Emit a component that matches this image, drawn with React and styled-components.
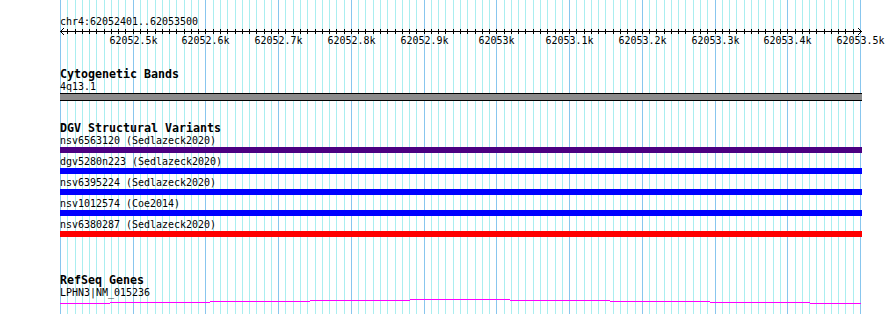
import React from "react";
import styled, { createGlobalStyle } from "styled-components";

const Global = createGlobalStyle`
  html, body { margin: 0; padding: 0; background: #fff; }
  body { font-family: "DejaVu Sans Mono", "Liberation Mono", monospace; color: #000; }
`;

const Page = styled.div`
  position: relative;
  width: 890px;
  height: 314px;
  overflow: hidden;
  background: #fff;
`;

const GridLayer = styled.svg`
  position: absolute;
  left: 0;
  top: 0;
  z-index: 0;
`;

const Content = styled.div`
  position: relative;
  z-index: 1;
  display: flex;
  flex-direction: column;
  padding-left: 60px;
  width: 802px;
`;

const RulerLabel = styled.div`
  margin-top: 15px;
  font-size: 9.97px;
  line-height: 13px;
  height: 13px;
  white-space: pre;
`;

const Axis = styled.svg`
  display: block;
  overflow: visible;
`;

const Track = styled.section`
  display: flex;
  flex-direction: column;
  margin-top: ${(p) => p.$gap}px;
`;

const TrackTitle = styled.div`
  font-weight: bold;
  font-size: 11.63px;
  line-height: 12px;
  height: 12px;
  white-space: pre;
`;

const FeatureLabel = styled.div`
  font-size: 9.97px;
  line-height: 13px;
  height: 13px;
  white-space: pre;
`;

const BandBar = styled.div`
  height: 6px;
  background: #8c8c8c;
  border-top: 1px solid #000;
  border-bottom: 1px solid #000;
`;

const FeatureRow = styled.div`
  display: flex;
  flex-direction: column;
  padding-bottom: 2px;
`;

const FeatureBar = styled.div`
  height: 6px;
  background: ${(p) => p.$color};
`;

const GeneLine = styled.svg`
  display: block;
`;

const minorXs = Array.from({ length: 111 }, (_, j) => ({
  x: 60 + Math.round((j * 800) / 110),
  major: j % 10 === 0,
}));

const tickLabels = Array.from({ length: 11 }, (_, k) => {
  const i = k + 1;
  const v = 620524 + i;
  const whole = Math.floor(v / 10);
  const frac = v % 10;
  return {
    x: Math.round((i * 800) / 11) + 0.5,
    text: frac === 0 ? `${whole}k` : `${whole}.${frac}k`,
  };
});

const features = [
  { label: "nsv6563120 (Sedlazeck2020)", color: "#4b0082" },
  { label: "dgv5280n223 (Sedlazeck2020)", color: "#0000ff" },
  { label: "nsv6395224 (Sedlazeck2020)", color: "#0000ff" },
  { label: "nsv1012574 (Coe2014)", color: "#0000ff" },
  { label: "nsv6380287 (Sedlazeck2020)", color: "#ff0000" },
];

const geneSegments = [
  [0, 50, 4],
  [50, 150, 3],
  [150, 250, 2],
  [250, 350, 1],
  [350, 450, 0],
  [450, 550, 1],
  [550, 650, 2],
  [650, 750, 3],
  [750, 801, 4],
];

export default function App() {
  return (
    <>
      <Global />
      <Page>
        <GridLayer width="890" height="314" shapeRendering="crispEdges">
          {minorXs.map((l, i) => (
            <rect
              key={i}
              x={l.x}
              y="0"
              width="1"
              height="314"
              fill={l.major ? "#88c6ee" : "#aaeef0"}
            />
          ))}
        </GridLayer>
        <Content>
          <RulerLabel>chr4:62052401..62053500</RulerLabel>
          <Axis width="830" height="19" shapeRendering="crispEdges">
            <rect x="0" y="3" width="802" height="1" fill="#000" />
            {minorXs.slice(1, 110).map((l, i) => (
              <rect key={i} x={l.x - 60} y="1" width="1" height="5" fill="#000" />
            ))}
            {[1, 2, 3].map((k) => (
              <g key={k}>
                <rect x={k} y={3 - k} width="1" height="1" fill="#000" />
                <rect x={k} y={3 + k} width="1" height="1" fill="#000" />
                <rect x={801 - k} y={3 - k} width="1" height="1" fill="#000" />
                <rect x={801 - k} y={3 + k} width="1" height="1" fill="#000" />
              </g>
            ))}
            {tickLabels.map((t) => (
              <text
                key={t.text}
                x={t.x}
                y="16"
                textAnchor="middle"
                fontFamily='"DejaVu Sans Mono", "Liberation Mono", monospace'
                fontSize="9.97"
                fill="#000"
              >
                {t.text}
              </text>
            ))}
          </Axis>

          <Track $gap={21}>
            <TrackTitle>Cytogenetic Bands</TrackTitle>
            <FeatureLabel>4q13.1</FeatureLabel>
            <BandBar />
          </Track>

          <Track $gap={21}>
            <TrackTitle>DGV Structural Variants</TrackTitle>
            {features.map((f) => (
              <FeatureRow key={f.label}>
                <FeatureLabel>{f.label}</FeatureLabel>
                <FeatureBar $color={f.color} />
              </FeatureRow>
            ))}
          </Track>

          <Track $gap={35}>
            <TrackTitle>RefSeq Genes</TrackTitle>
            <FeatureLabel>LPHN3|NM_015236</FeatureLabel>
            <GeneLine width="802" height="5" shapeRendering="crispEdges">
              {geneSegments.map(([a, b, y], i) => (
                <rect key={i} x={a} y={y} width={b - a} height="1" fill="#ff00ff" />
              ))}
            </GeneLine>
          </Track>
        </Content>
      </Page>
    </>
  );
}
